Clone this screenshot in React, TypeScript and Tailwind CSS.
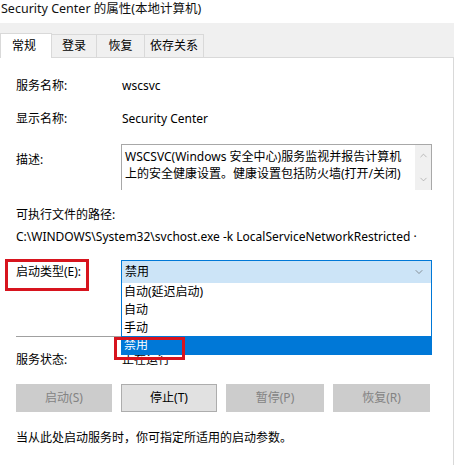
import { ChevronDown, ChevronUp } from "lucide-react";

const font = "font-['Noto_Sans','Noto_Sans_CJK_SC',sans-serif]";

function Tab({ label, active, w }: { label: string; active?: boolean; w: string }) {
  if (active) {
    return (
      <div className={`${w} h-[25px] -mb-px bg-white border-l border-t border-r border-[#d9d9d9] flex items-center justify-center text-[12px] pr-[4px]`}>
        {label}
      </div>
    );
  }
  return (
    <div className={`${w} h-[23px] bg-[#f0f0f0] border-t border-r border-[#d9d9d9] flex items-center justify-center text-[12px]`}>
      {label}
    </div>
  );
}

function Row({ label, children, className = "" }: { label: string; children?: React.ReactNode; className?: string }) {
  return (
    <div className={`flex items-center ${className}`}>
      <div className="w-[106px] shrink-0">{label}</div>
      {children}
    </div>
  );
}

function Btn({ label, enabled, w }: { label: string; enabled?: boolean; w: string }) {
  return (
    <div
      className={`${w} h-[28px] flex items-center justify-center border ${
        enabled ? "bg-[#e1e1e1] border-[#adadad] text-black" : "bg-[#cccccc] border-[#cccccc] text-[#838383]"
      }`}
    >
      {label}
    </div>
  );
}

export default function App() {
  return (
    <div className={`w-[454px] h-[465px] bg-white text-[12px] text-black leading-none overflow-hidden relative ${font}`}>
      <div className="h-[23px] pl-[1px] pt-[3px] text-[12.5px] text-[#111]">Security Center 的属性(本地计算机)</div>

      <div className="h-[35px] bg-[#f0f0f0] border-b border-[#d9d9d9] flex items-end">
        <Tab label="常规" active w="w-[52px]" />
        <Tab label="登录" w="w-[45px]" />
        <Tab label="恢复" w="w-[48px]" />
        <Tab label="依存关系" w="w-[59px]" />
      </div>

      <div className="relative h-[407px] border-r border-[#d9d9d9] pl-[16px] pr-[21px] pt-[20px]">
        <Row label="服务名称:" className="h-[16px]">
          <span>wscsvc</span>
        </Row>
        <Row label="显示名称:" className="h-[16px] mt-[17px]">
          <span>Security Center</span>
        </Row>

        <div className="flex mt-[17px]">
          <div className="w-[105px] shrink-0 pt-[10px]">描述:</div>
          <div className="flex-1 h-[46px] border-t border-l border-r border-[#a8a8a8] flex">
            <div className="flex-1 pl-[3px] pt-[3px] leading-[17px] text-[12px]">
              WSCSVC(Windows 安全中心)服务监视并报告计算机
              <br />
              上的安全健康设置。健康设置包括防火墙(打开/关闭)
            </div>
            <div className="w-[16px] bg-[#f0f0f0] flex flex-col items-center justify-between py-[5px] text-[#a0a0a0]">
              <ChevronUp size={11} strokeWidth={1.5} />
              <ChevronDown size={11} strokeWidth={1.5} />
            </div>
          </div>
        </div>

        <div className="mt-[17px] h-[16px] flex items-center">可执行文件的路径:</div>
        <div className="mt-[6px] h-[16px] flex items-center whitespace-nowrap">
          C:\WINDOWS\System32\svchost.exe -k LocalServiceNetworkRestricted ·
        </div>

        <div className="flex items-center mt-[15px]">
          <div className="w-[105px] shrink-0">启动类型(E):</div>
          <div className="flex-1 h-[24px] bg-[#cce4f7] border border-[#0078d7] flex items-center pl-[3px] pr-[6px]">
            <span className="flex-1">禁用</span>
            <ChevronDown size={12} strokeWidth={1.2} className="text-[#555]" />
          </div>
        </div>

        <div className="mt-[52px] h-px bg-[#a0a0a0]" />

        <Row label="服务状态:" className="h-[16px] mt-[15px]">
          <span>正在运行</span>
        </Row>

        <div className="flex mt-[16px] gap-[9px]">
          <Btn label="启动(S)" w="w-[96px]" />
          <Btn label="停止(T)" enabled w="w-[96px]" />
          <Btn label="暂停(P)" w="w-[98px]" />
          <Btn label="恢复(R)" w="w-[97px]" />
        </div>

        <div className="mt-[18px] h-[16px] flex items-center">当从此处启动服务时，你可指定所适用的启动参数。</div>

        {/* dropdown list overlay */}
        <div className="absolute left-[121px] top-[225px] w-[311px] h-[72px] bg-white border-l border-r border-b border-[#0078d7] flex flex-col">
          <div className="h-[18px] pl-[2px] flex items-center">自动(延迟启动)</div>
          <div className="h-[18px] pl-[2px] flex items-center">自动</div>
          <div className="h-[17px] pl-[2px] flex items-center">手动</div>
          <div className="h-[18px] pl-[2px] flex items-center bg-[#0078d7] text-white">禁用</div>
        </div>

        {/* red highlight boxes */}
        <div className="absolute left-[5px] top-[201px] w-[84px] h-[32px] border-[3px] border-[#d7141e]" />
        <div className="absolute left-[114px] top-[279px] w-[71px] h-[23px] border-[3px] border-[#d7141e]" />
      </div>
    </div>
  );
}
